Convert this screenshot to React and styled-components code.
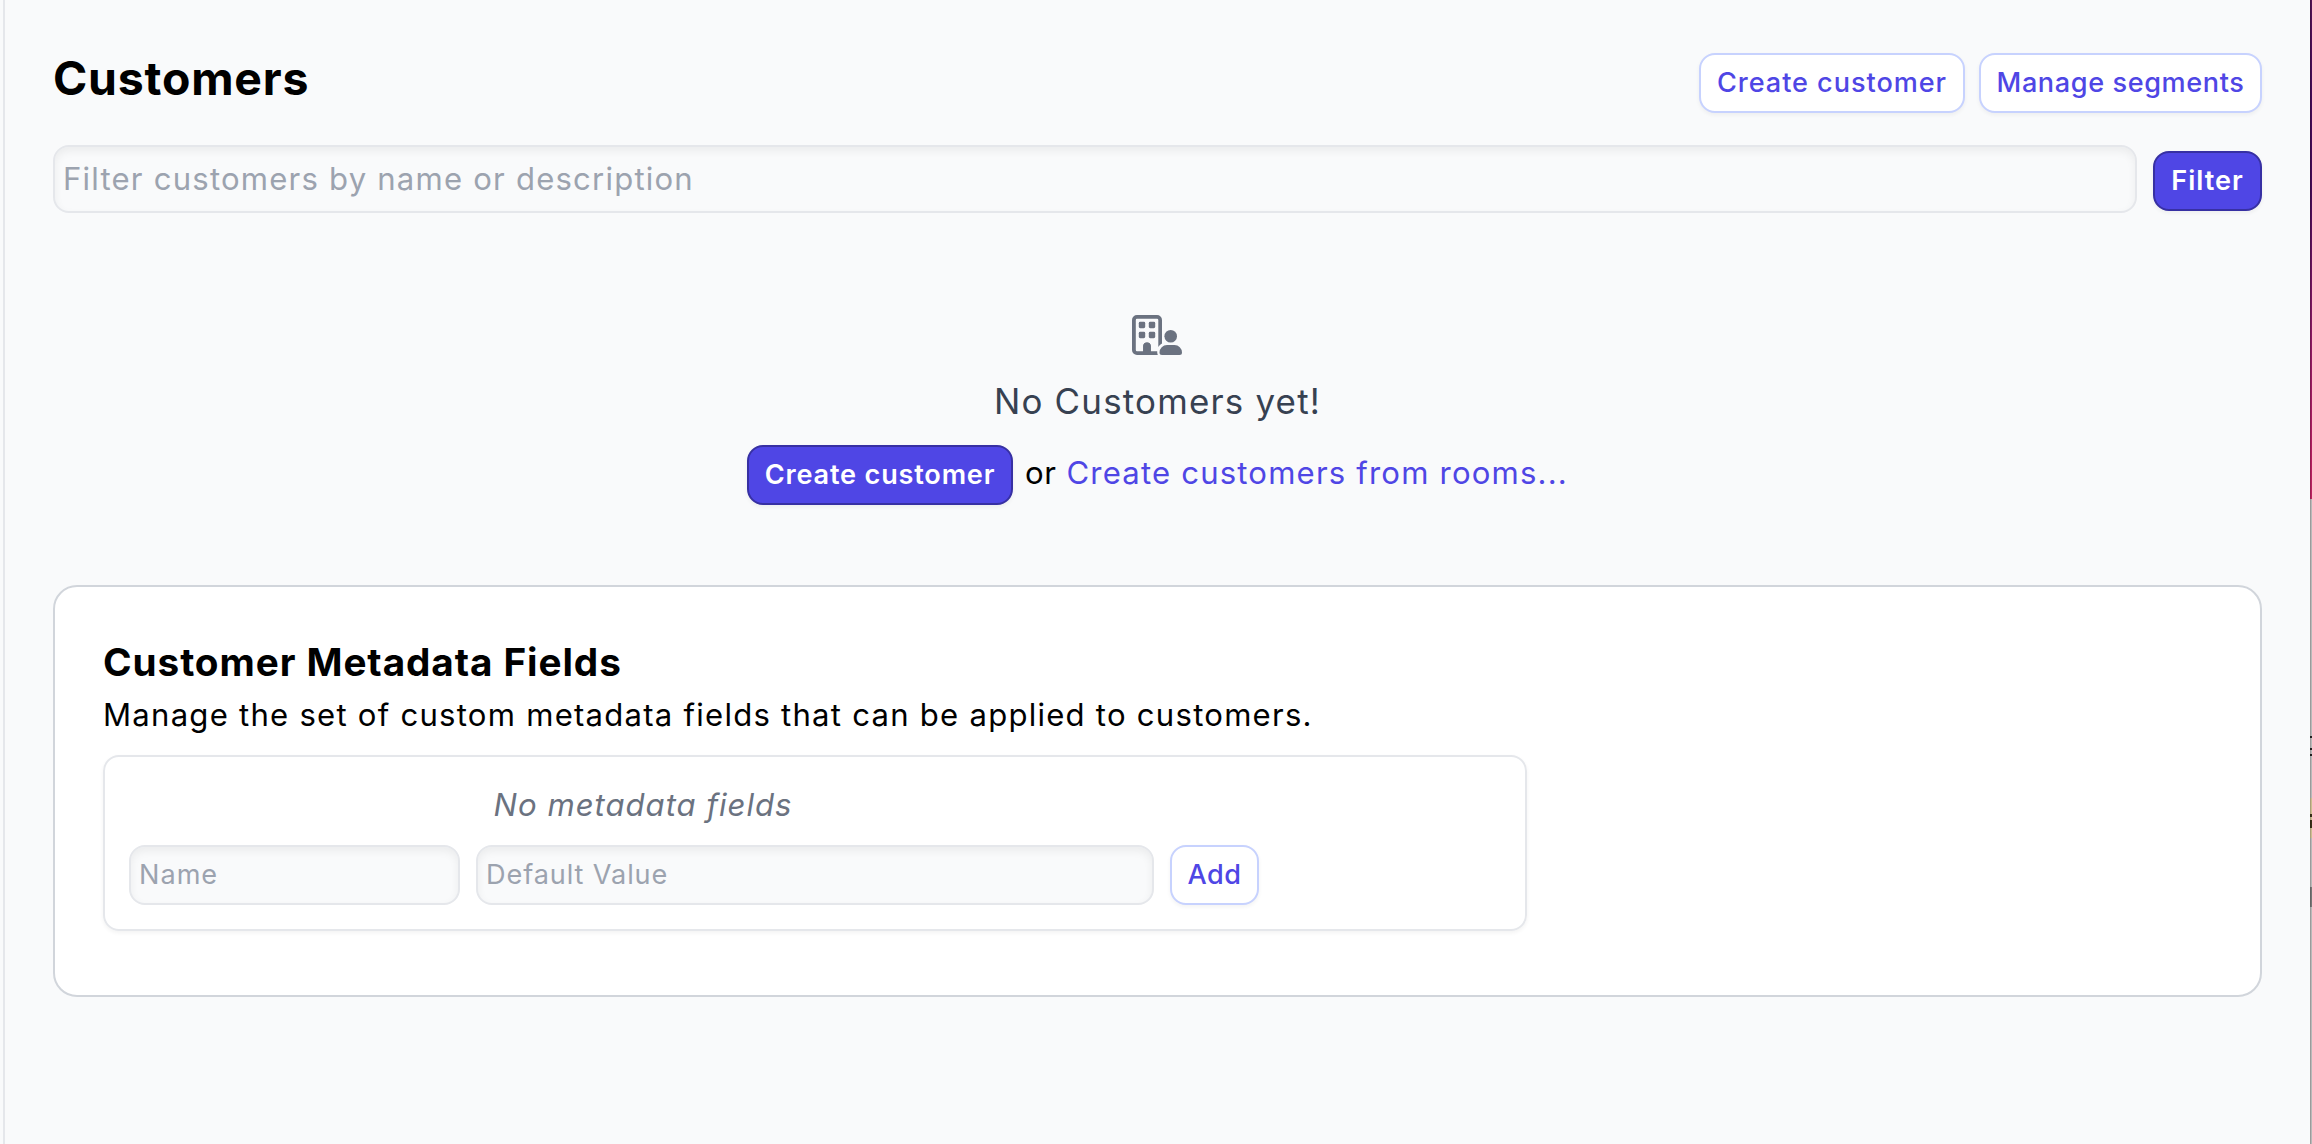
import React from 'react';
import styled, { createGlobalStyle } from 'styled-components';

const GlobalStyle = createGlobalStyle`
  * { box-sizing: border-box; }
  body {
    margin: 0;
    background: #f9fafb;
    color: #000;
    font-family: Inter, "Liberation Sans", sans-serif;
    font-size: 31.1px;
  }
`;

const Shell = styled.div`
  display: flex;
  height: 1144px;
  padding-left: 3px;
  overflow: hidden;
`;

const Page = styled.main`
  flex: 1;
  min-width: 0;
  border-left: 2px solid #e5e7eb;
  padding: 53px 48px 0;
`;

const Backdrop = styled.div`
  width: 2px;
  background:
    linear-gradient(90deg, rgba(0, 0, 0, 0.16) 50%, transparent 50%),
    linear-gradient(
      180deg,
      #521253 0, #410a55 100px, #430b55 190px, #8a1a62 340px, #b3205f 460px, #bb2560 499px,
      #b9b9b9 499px, #b9b9b9 736px, #222 736px, #222 738px,
      #b9b9b9 738px, #b9b9b9 748px, #222 748px, #222 750px,
      #b9b9b9 750px, #b9b9b9 754px, #222 754px, #222 756px,
      #b9b9b9 756px, #b9b9b9 798px, #cdbd92 798px, #cdbd92 814px,
      #3a3119 814px, #3a3119 817px, #cdbd92 817px, #cdbd92 820px,
      #3a3119 820px, #3a3119 828px, #cdbd92 828px, #cdbd92 838px,
      #b9b9b9 838px, #b9b9b9 887px, #777 887px, #777 907px,
      #b9b9b9 907px
    );
`;

const Header = styled.header`
  display: flex;
  justify-content: space-between;
  align-items: flex-start;
`;

const Title = styled.h1`
  margin: 0;
  font-size: 46.4px;
  font-weight: 700;
  line-height: 51px;
  letter-spacing: 0.8px;
`;

const Actions = styled.div`
  display: flex;
  gap: 14px;
`;

const Button = styled.button`
  display: flex;
  align-items: center;
  justify-content: center;
  width: ${(p) => p.$width}px;
  height: 60px;
  padding: 0 0 2px;
  border: 2px solid ${(p) => (p.$primary ? '#3730a3' : '#c7d2fe')};
  border-radius: 16px;
  background: ${(p) => (p.$primary ? '#4f46e5' : '#fff')};
  color: ${(p) => (p.$primary ? '#fff' : '#4f46e5')};
  box-shadow: 0 2px 4px rgba(0, 0, 0, 0.05);
  font-family: inherit;
  font-size: 27.1px;
  font-weight: ${(p) => (p.$primary ? 600 : 500)};
  letter-spacing: ${(p) => p.$tracking}px;
  white-space: nowrap;
`;

const FilterForm = styled.div`
  display: flex;
  align-items: flex-end;
  gap: 16px;
  margin-top: 32px;

  ${Button} { margin-bottom: 2px; }
`;

const Input = styled.input`
  flex: ${(p) => (p.$width ? 'none' : 1)};
  width: ${(p) => (p.$width ? `${p.$width}px` : 'auto')};
  min-width: 0;
  height: ${(p) => (p.$large ? 68 : 60)}px;
  padding: 0 8px ${(p) => (p.$large ? 0 : 2)}px;
  border: 2px solid #e5e7eb;
  border-radius: 16px;
  outline: none;
  background: #f9fafb;
  box-shadow: inset 0 4px 8px rgba(0, 0, 0, 0.06);
  font-family: inherit;
  font-size: ${(p) => (p.$large ? 31.1 : 27.1)}px;
  letter-spacing: ${(p) => p.$tracking}px;

  &::placeholder { color: #9ca3af; opacity: 1; }
`;

const EmptyState = styled.section`
  display: flex;
  flex-direction: column;
  align-items: center;
  padding: 102px 0 80px;
`;

const IconWrap = styled.div`
  display: flex;
  margin-right: 2px;
`;

const EmptyMessage = styled.div`
  margin-top: 26px;
  color: #374151;
  font-size: 34.9px;
  line-height: 40px;
  letter-spacing: 1.21px;
`;

const EmptyActions = styled.div`
  display: flex;
  margin-top: 24px;
`;

const Or = styled.span`
  margin: 0 10px 0 12px;
  line-height: 56px;
  letter-spacing: 0.5px;
`;

const Link = styled.a`
  color: #4f46e5;
  line-height: 56px;
  letter-spacing: 1.18px;
`;

const Card = styled.section`
  height: 412px;
  padding: 48px;
  border: 2px solid #d1d5db;
  border-radius: 24px;
  background: #fff;
`;

const CardTitle = styled.h2`
  margin: 0 0 1px;
  font-size: 38.7px;
  font-weight: 700;
  line-height: 55px;
  letter-spacing: 0.92px;
`;

const Description = styled.p`
  margin: 0;
  line-height: 48px;
  letter-spacing: 1.24px;
`;

const FieldBox = styled.div`
  width: 1424px;
  height: 176px;
  margin-top: 16px;
  padding: 24px;
  border: 2px solid #e5e7eb;
  border-radius: 16px;
  box-shadow: 0 2px 4px rgba(0, 0, 0, 0.05);
`;

const NoFields = styled.div`
  width: 1028px;
  color: #6b7280;
  font-style: italic;
  line-height: 48px;
  letter-spacing: 1px;
  text-align: center;
`;

const FieldRow = styled.div`
  display: flex;
  gap: 16px;
  margin-top: 16px;
`;

function BuildingUserIcon() {
  return (
    <svg width="50" height="40" viewBox="0 0 50 40" fill="#6b7280">
      <path
        fillRule="evenodd"
        d="M5 0H25A5 5 0 0 1 30 5V28.6Q27.6 29.8 26.3 32V5Q26.3 3.8 25 3.8H5Q3.8 3.8 3.8 5V35Q3.8 36.2 5 36.2H11.2V31.2A3.8 3.8 0 0 1 18.8 31.2V36.2H25.2Q25 38 25.8 40H5A5 5 0 0 1 0 35V5A5 5 0 0 1 5 0Z"
      />
      <rect x="6.8" y="6.8" width="6.4" height="6.4" rx="1.4" />
      <rect x="16.8" y="6.8" width="6.4" height="6.4" rx="1.4" />
      <rect x="6.8" y="16.8" width="6.4" height="6.4" rx="1.4" />
      <rect x="16.8" y="16.8" width="6.4" height="6.4" rx="1.4" />
      <path d="M11.2 31.2A3.8 3.8 0 0 1 18.8 31.2V38H11.2Z" />
      <circle cx="38.7" cy="21.2" r="6.3" />
      <path d="M35 30H42.5A7.5 7.5 0 0 1 50 37.5A2.5 2.5 0 0 1 47.5 40H30A2.5 2.5 0 0 1 27.5 37.5A7.5 7.5 0 0 1 35 30Z" />
    </svg>
  );
}

export default function App() {
  return (
    <>
      <GlobalStyle />
      <Shell>
        <Page>
          <Header>
            <Title>Customers</Title>
            <Actions>
              <Button $width={266} $tracking={0.95}>Create customer</Button>
              <Button $width={283} $tracking={0.6}>Manage segments</Button>
            </Actions>
          </Header>
          <FilterForm>
            <Input $large $tracking={1.2} placeholder="Filter customers by name or description" />
            <Button $primary $width={109} $tracking={1}>Filter</Button>
          </FilterForm>
          <EmptyState>
            <IconWrap>
              <BuildingUserIcon />
            </IconWrap>
            <EmptyMessage>No Customers yet!</EmptyMessage>
            <EmptyActions>
              <Button $primary $width={266} $tracking={0.81}>Create customer</Button>
              <Or>or</Or>
              <Link>Create customers from rooms...</Link>
            </EmptyActions>
          </EmptyState>
          <Card>
            <CardTitle>Customer Metadata Fields</CardTitle>
            <Description>
              Manage the set of custom metadata fields that can be applied to customers.
            </Description>
            <FieldBox>
              <NoFields>No metadata fields</NoFields>
              <FieldRow>
                <Input $width={331} $tracking={1} placeholder="Name" />
                <Input $width={678} $tracking={0.9} placeholder="Default Value" />
                <Button $width={89} $tracking={0.5}>Add</Button>
              </FieldRow>
            </FieldBox>
          </Card>
        </Page>
        <Backdrop />
      </Shell>
    </>
  );
}
